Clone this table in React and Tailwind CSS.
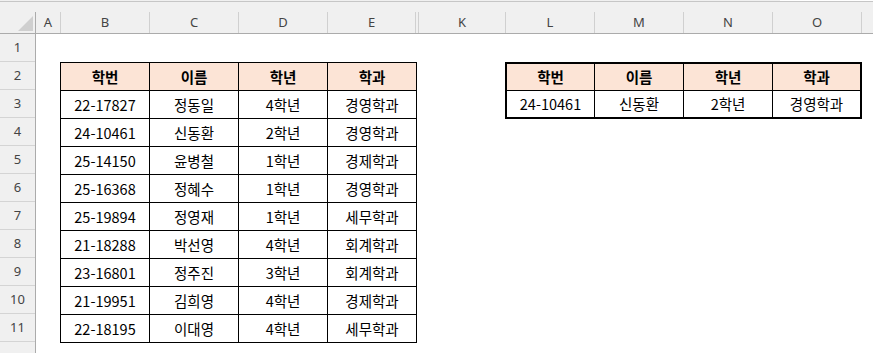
import React from "react";

// column header layout (x positions follow the sheet grid)
const columns = [
  { key: "A", w: "w-[24px]", line: false },
  { key: "B", w: "w-[89px]", line: true },
  { key: "C", w: "w-[89px]", line: true },
  { key: "D", w: "w-[89px]", line: true },
  { key: "E", w: "w-[88px]", line: true },
  { key: "", w: "w-[3px]", line: true },
  { key: "K", w: "w-[87px]", line: true },
  { key: "L", w: "w-[89px]", line: true },
  { key: "M", w: "w-[89px]", line: true },
  { key: "N", w: "w-[89px]", line: true },
  { key: "O", w: "w-[89px]", line: true },
  { key: "", w: "flex-1", line: true },
];

const heads = ["학번", "이름", "학년", "학과"];

const students = [
  ["22-17827", "정동일", "4학년", "경영학과"],
  ["24-10461", "신동환", "2학년", "경영학과"],
  ["25-14150", "윤병철", "1학년", "경제학과"],
  ["25-16368", "정혜수", "1학년", "경영학과"],
  ["25-19894", "정영재", "1학년", "세무학과"],
  ["21-18288", "박선영", "4학년", "회계학과"],
  ["23-16801", "정주진", "3학년", "회계학과"],
  ["21-19951", "김희영", "4학년", "경제학과"],
  ["22-18195", "이대영", "4학년", "세무학과"],
];

const lookup = ["24-10461", "신동환", "2학년", "경영학과"];

// last row only peeks in at the bottom edge, so its number isn't shown
const rowNums = [1, 2, 3, 4, 5, 6, 7, 8, 9, 10, 11, ""];

function Cell({ children, head, className = "" }) {
  return (
    <div
      className={`flex items-center justify-center border-black text-[14.5px] text-black ${
        head ? "bg-[#fce4d6] font-bold" : "bg-white"
      } ${className}`}
    >
      {children}
    </div>
  );
}

export default function App() {
  return (
    <div
      className="w-[873px] h-[353px] overflow-hidden bg-white flex flex-col"
      style={{ fontFamily: '"Noto Sans", "Noto Sans CJK KR", sans-serif' }}
    >
      {/* ribbon edge */}
      <div className="h-[1px] flex shrink-0">
        <div className="w-[780px] bg-[#f0f0f0]" />
        <div className="flex-1 bg-white" />
      </div>
      <div className="h-[1px] bg-[#c6c6c6] shrink-0" />
      <div className="h-[10px] bg-[#f0f0f0] shrink-0" />

      {/* column letters */}
      <div className="h-[22px] flex shrink-0 bg-[#f0f0f0] border-b border-[#ababab] text-[13px] text-[#444]">
        <div className="w-[36px] border-r border-[#ababab] flex items-end justify-end pr-[2px] pb-[2px]">
          <svg width="15" height="15" viewBox="0 0 15 15">
            <polygon points="15,0 15,15 0,15" fill="#cfcfcf" />
          </svg>
        </div>
        {columns.map((c, i) => (
          <div
            key={i}
            className={`${c.w} ${c.line ? "border-l border-[#d0d0d0]" : ""} flex items-center justify-center`}
          >
            {c.key}
          </div>
        ))}
      </div>

      <div className="flex flex-1">
        {/* row numbers */}
        <div className="w-[36px] bg-[#f0f0f0] border-r border-[#ababab] flex flex-col text-[13px] text-[#444]">
          {rowNums.map((n, i) => (
            <div
              key={i}
              className="h-[28px] shrink-0 border-b border-[#d4d4d4] flex items-center justify-center"
            >
              {n}
            </div>
          ))}
        </div>

        {/* sheet */}
        <div
          className="flex-1 pt-[28px]"
          style={{ fontFamily: '"Noto Sans CJK KR", "Noto Sans", sans-serif' }}
        >
          <div className="flex items-start pl-[24px]">
            {/* student list B2:E11 */}
            <div className="border-l border-t border-black">
              {[heads, ...students].map((row, r) => (
                <div key={r} className="flex">
                  {row.map((v, c) => (
                    <Cell key={c} head={r === 0} className="w-[89px] h-[28px] border-r border-b">
                      {v}
                    </Cell>
                  ))}
                </div>
              ))}
            </div>

            {/* lookup result L2:O3 */}
            <div className="ml-[88px] border-2 border-black">
              {[heads, lookup].map((row, r) => (
                <div key={r} className="flex">
                  {row.map((v, c) => (
                    <Cell
                      key={c}
                      head={r === 0}
                      className={`${r === 0 ? "h-[27px] border-b" : "h-[26px]"} ${
                        c === 0 ? "w-[88px]" : c === 3 ? "w-[87px]" : "w-[89px]"
                      } ${c < 3 ? "border-r" : ""}`}
                    >
                      {v}
                    </Cell>
                  ))}
                </div>
              ))}
            </div>
          </div>
        </div>
      </div>
    </div>
  );
}
